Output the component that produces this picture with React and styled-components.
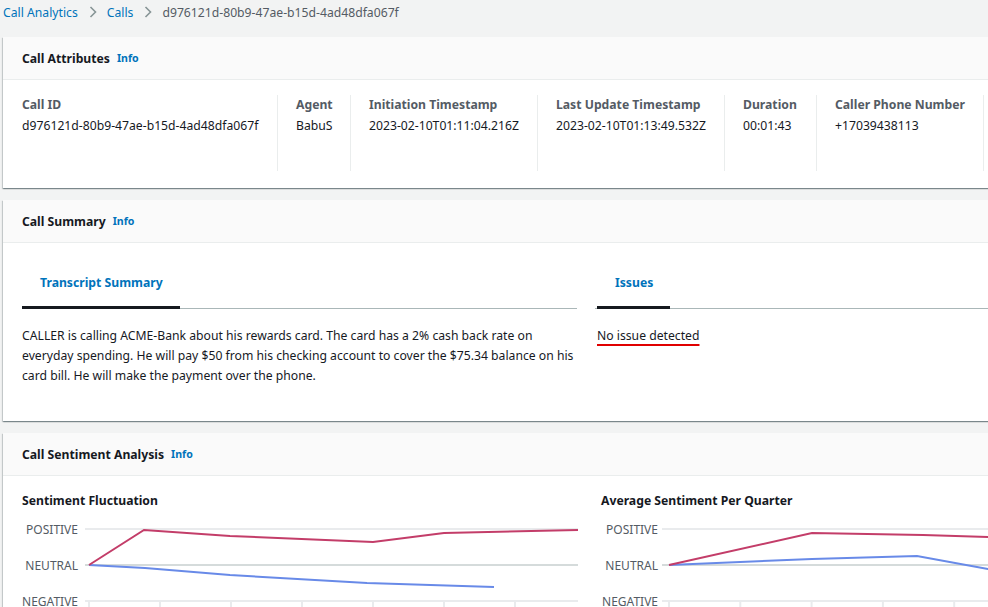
import React from "react"
import styled, { createGlobalStyle } from "styled-components"

const GlobalStyle = createGlobalStyle`
  html, body {
    margin: 0;
    padding: 0;
    background: #f2f3f3;
    overflow: hidden;
  }
  body {
    font-family: "Noto Sans", "Open Sans", sans-serif;
    font-size: 12.2px;
    color: #16191f;
  }
`

const Page = styled.div`
  width: 1200px;
  padding: 0 0 0 3px;
`

const Breadcrumbs = styled.nav`
  display: flex;
  align-items: center;
  height: 24px;
  margin-bottom: 13px;
  font-size: 12.2px;
`

const Crumb = styled.span`
  color: ${p => (p.$current ? "#545b64" : "#0073bb")};
`

const Chevron = styled.span`
  display: inline-flex;
  margin: 0 10px 0 11px;
  color: #879596;
`

const Panel = styled.section`
  background: #ffffff;
  box-shadow: 0 1px 1px 0 rgba(0, 28, 36, 0.3), 1px 1px 1px 0 rgba(0, 28, 36, 0.15),
    -1px 1px 1px 0 rgba(0, 28, 36, 0.15);
  margin-bottom: 12px;
`

const PanelHeader = styled.header`
  display: flex;
  align-items: center;
  gap: 7px;
  height: 42px;
  padding: 0 19px;
  background: #fafafa;
  border-bottom: 1px solid #eaeded;
`

const PanelTitle = styled.h2`
  margin: 0;
  font-size: 12.2px;
  font-weight: 700;
  color: #16191f;
`

const InfoLink = styled.span`
  font-size: 10.6px;
  font-weight: 700;
  color: #0073bb;
`

const AttrGrid = styled.div`
  display: grid;
  grid-template-columns: 275px 73px 187px 187px 92px 167px 1fr;
  padding: 15px 0 17px;
`

const AttrCol = styled.div`
  height: 76px;
  box-sizing: border-box;
  padding-left: ${p => (p.$first ? "19px" : "18px")};
  border-right: 1px solid #eaeded;
  line-height: 20px;
`

const AttrLabel = styled.div`
  font-weight: 700;
  color: #545b64;
`

const AttrValue = styled.div`
  color: #16191f;
  margin-top: 1px;
`

const SummaryBody = styled.div`
  display: grid;
  grid-template-columns: 555px 1fr;
  column-gap: 18px;
  padding: 0 19px 35px;
`

const TabList = styled.div`
  display: flex;
  border-bottom: 1px solid #aab7b8;
`

const Tab = styled.div`
  padding: 31px 17px 14px 18px;
  line-height: 18px;
  font-weight: 700;
  color: #0073bb;
  border-bottom: 3px solid #16191f;
  margin-bottom: -1px;
  margin-left: ${p => p.$offset || 0}px;
`

const SummaryText = styled.p`
  margin: 17px 0 0;
  line-height: 20px;
  color: #16191f;
`

const IssueText = styled.span`
  display: inline-block;
  margin: 17px 0 0 2px;
  line-height: 20px;
  text-decoration: underline;
  text-decoration-color: #e00000;
  text-decoration-thickness: 2px;
  text-underline-offset: 4px;
`

const ChartsBody = styled.div`
  display: grid;
  grid-template-columns: 556px 1fr;
  column-gap: 23px;
  padding: 16px 19px 0;
`

const ChartTitle = styled.h3`
  margin: 0;
  font-size: 12.2px;
  line-height: 18px;
  font-weight: 700;
  color: #16191f;
`

const ChartSvg = styled.svg`
  display: block;
  margin-top: 2px;
  overflow: visible;
  font-family: "Noto Sans", "Open Sans", sans-serif;
  font-size: 12px;
`

const levels = [
  { name: "POSITIVE", y: 17 },
  { name: "NEUTRAL", y: 53 },
  { name: "NEGATIVE", y: 89 },
]

const toPoints = pts => pts.map(p => p.join(",")).join(" ")

const SentimentChart = ({ width, labelX, gridX, tickStart, tickStep, ticks, series }) => (
  <ChartSvg width={width} height={100}>
    {levels.map(l => (
      <g key={l.name}>
        <line
          x1={gridX}
          x2={width}
          y1={l.y}
          y2={l.y}
          stroke={l.name === "NEUTRAL" ? "#d5dbdb" : "#e9ebed"}
          strokeWidth="2"
        />
        <text x={labelX} y={l.y + 5} textAnchor="end" fill="#545b64">
          {l.name}
        </text>
      </g>
    ))}
    {Array.from({ length: ticks }).map((_, i) => (
      <line
        key={i}
        x1={tickStart + i * tickStep}
        x2={tickStart + i * tickStep}
        y1={89}
        y2={98}
        stroke="#e9ebed"
        strokeWidth="2"
      />
    ))}
    {series.map(s => (
      <polyline key={s.color} points={toPoints(s.points)} fill="none" stroke={s.color} strokeWidth="2" />
    ))}
  </ChartSvg>
)

const attributes = [
  { label: "Call ID", value: "d976121d-80b9-47ae-b15d-4ad48dfa067f" },
  { label: "Agent", value: "BabuS" },
  { label: "Initiation Timestamp", value: "2023-02-10T01:11:04.216Z" },
  { label: "Last Update Timestamp", value: "2023-02-10T01:13:49.532Z" },
  { label: "Duration", value: "00:01:43" },
  { label: "Caller Phone Number", value: "+17039438113" },
  { label: "", value: "" },
]

const ChevronIcon = () => (
  <svg width="8" height="12" viewBox="0 0 8 12">
    <polyline points="1.5,1 6.5,6 1.5,11" fill="none" stroke="currentColor" strokeWidth="1.6" />
  </svg>
)

const App = () => {
  return (
    <Page>
      <GlobalStyle />
      <Breadcrumbs>
        <Crumb>Call Analytics</Crumb>
        <Chevron>
          <ChevronIcon />
        </Chevron>
        <Crumb>Calls</Crumb>
        <Chevron>
          <ChevronIcon />
        </Chevron>
        <Crumb $current>d976121d-80b9-47ae-b15d-4ad48dfa067f</Crumb>
      </Breadcrumbs>

      <Panel>
        <PanelHeader>
          <PanelTitle>Call Attributes</PanelTitle>
          <InfoLink>Info</InfoLink>
        </PanelHeader>
        <AttrGrid>
          {attributes.map((a, i) => (
            <AttrCol key={i} $first={i === 0}>
              <AttrLabel>{a.label}</AttrLabel>
              <AttrValue>{a.value}</AttrValue>
            </AttrCol>
          ))}
        </AttrGrid>
      </Panel>

      <Panel>
        <PanelHeader>
          <PanelTitle>Call Summary</PanelTitle>
          <InfoLink>Info</InfoLink>
        </PanelHeader>
        <SummaryBody>
          <div>
            <TabList>
              <Tab>Transcript Summary</Tab>
            </TabList>
            <SummaryText>
              CALLER is calling ACME-Bank about his rewards card. The card has a 2% cash back rate on
              everyday spending. He will pay $50 from his checking account to cover the $75.34 balance on his
              card bill. He will make the payment over the phone.
            </SummaryText>
          </div>
          <div>
            <TabList>
              <Tab $offset={2}>Issues</Tab>
            </TabList>
            <IssueText>No issue detected</IssueText>
          </div>
        </SummaryBody>
      </Panel>

      <Panel>
        <PanelHeader>
          <PanelTitle>Call Sentiment Analysis</PanelTitle>
          <InfoLink>Info</InfoLink>
        </PanelHeader>
        <ChartsBody>
          <div>
            <ChartTitle>Sentiment Fluctuation</ChartTitle>
            <SentimentChart
              width={556}
              labelX={56}
              gridX={63}
              tickStart={67}
              tickStep={71}
              ticks={7}
              series={[
                { color: "#688ae8", points: [[67, 53], [123, 56], [208, 63], [345, 71], [472, 75]] },
                { color: "#c33d69", points: [[67, 53], [122, 18], [208, 24], [351, 30], [422, 21], [556, 18]] },
              ]}
            />
          </div>
          <div>
            <ChartTitle>Average Sentiment Per Quarter</ChartTitle>
            <SentimentChart
              width={560}
              labelX={57}
              gridX={61}
              tickStart={68}
              tickStep={71.3}
              ticks={7}
              series={[
                { color: "#688ae8", points: [[68, 53], [211, 47], [316, 44], [387, 57], [460, 70]] },
                { color: "#c33d69", points: [[68, 53], [211, 21], [322, 23], [387, 25], [460, 27]] },
              ]}
            />
          </div>
        </ChartsBody>
      </Panel>
    </Page>
  )
}

export default App
